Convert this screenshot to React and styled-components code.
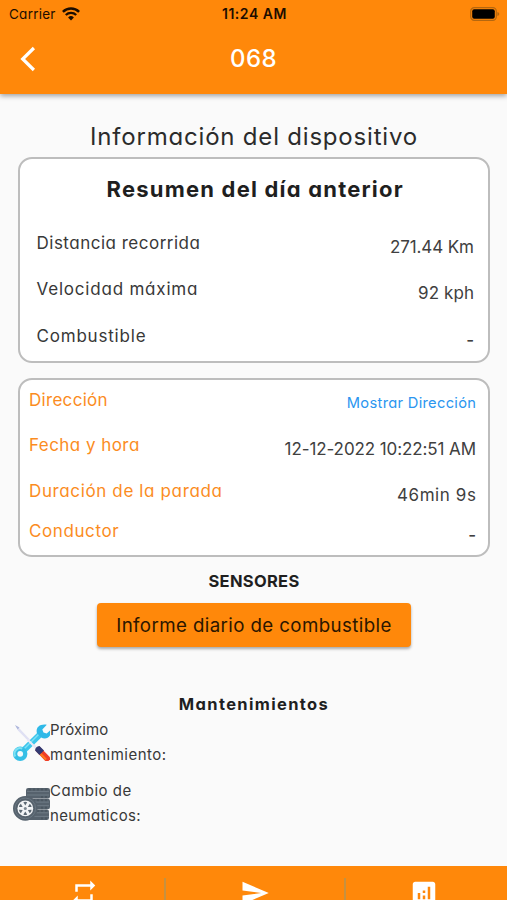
import React from 'react';
import styled, { createGlobalStyle } from 'styled-components';
import { MdRepeat, MdSend, MdAnalytics } from 'react-icons/md';

const GlobalStyle = createGlobalStyle`
  * {
    box-sizing: border-box;
  }

  body {
    margin: 0;
    background-color: #fafafa;
    font-family: Inter, "Liberation Sans", sans-serif;
    font-feature-settings: 'cv11', 'calt' 0;
    color: #1f1f1f;
  }
`;

const Screen = styled.div`
  display: flex;
  flex-direction: column;
  width: 100%;
  height: 900px;
  overflow: hidden;
  background-color: #fafafa;
`;

const Header = styled.header`
  flex: none;
  height: 94px;
  background-color: #ff880a;
  box-shadow: 0 2px 5px rgba(0, 0, 0, 0.36);
`;

const StatusBar = styled.div`
  display: grid;
  grid-template-columns: 1fr auto 1fr;
  align-items: center;
  height: 27px;
  padding: 0 7px 0 9px;
  color: #1c0d00;
`;

const Carrier = styled.div`
  display: flex;
  align-items: center;
  gap: 6px;
  font-size: 13.5px;
  letter-spacing: 0.25px;
`;

const Clock = styled.div`
  font-size: 14px;
  font-weight: 600;
  letter-spacing: 0.55px;
`;

const BatteryBox = styled.div`
  display: flex;
  justify-content: flex-end;
`;

const NavBar = styled.div`
  display: grid;
  grid-template-columns: 60px 1fr 60px;
  align-items: center;
  height: 64px;
  color: #fff;
`;

const BackButton = styled.button`
  display: flex;
  padding: 0 0 0 20px;
  border: 0;
  background: transparent;
  color: #fff;
`;

const NavTitle = styled.h1`
  margin: 0;
  font-size: 24px;
  line-height: 60px;
  font-weight: 500;
  text-align: center;
  letter-spacing: 0.4px;
`;

const Content = styled.main`
  flex: 1;
  display: flex;
  flex-direction: column;
  padding: 27px 17px 0 18px;
`;

const PageTitle = styled.h2`
  margin: 0;
  font-size: 24px;
  line-height: 32px;
  font-weight: 400;
  text-align: center;
  white-space: nowrap;
  color: #2b2b2b;
  letter-spacing: 0.8px;
`;

const Card = styled.section`
  height: ${(props) => props.$height}px;
  margin-top: ${(props) => props.$gap}px;
  padding: ${(props) => props.$padding};
  border: 2px solid #bdbdbd;
  border-radius: 14px;
  background-color: #fff;
`;

const CardTitle = styled.h3`
  margin: 0 0 26.5px;
  font-size: 22px;
  line-height: 30px;
  font-weight: 700;
  text-align: center;
  white-space: nowrap;
  letter-spacing: 1.2px;
`;

const Row = styled.div`
  display: flex;
  justify-content: space-between;
  align-items: flex-start;
  height: ${(props) => props.$height || 46.5}px;
`;

const Label = styled.span`
  font-size: 17px;
  line-height: 24px;
  font-weight: 400;
  color: ${(props) => (props.$accent ? '#fb8c1e' : '#383838')};
  letter-spacing: ${(props) => props.$track || 0}px;
`;

const Value = styled.span`
  margin-right: ${(props) => -(props.$track || 0)}px;
  padding-top: 4px;
  font-size: 17px;
  line-height: 24px;
  font-weight: ${(props) => props.$weight || 400};
  color: #404040;
  letter-spacing: ${(props) => props.$track || 0}px;
`;

const Link = styled(Value)`
  padding-top: 3px;
  font-size: 14.7px;
  color: #2b96f0;
`;

const SectionTitle = styled.h4`
  margin: ${(props) => props.$gap}px 0 0;
  font-size: 16.5px;
  line-height: 24px;
  font-weight: 700;
  text-align: center;
  letter-spacing: ${(props) => props.$track || 0}px;
`;

const ReportButton = styled.button`
  align-self: center;
  width: 314px;
  height: 44px;
  margin-top: 10px;
  padding: 0;
  border: 0;
  border-radius: 4px;
  background-color: #ff880a;
  box-shadow: 0 2px 3px rgba(0, 0, 0, 0.32);
  font-family: inherit;
  font-size: 18.7px;
  color: #2b1600;
  white-space: nowrap;
  font-feature-settings: normal;
  letter-spacing: 0.4px;
`;

const Task = styled.div`
  display: flex;
  align-items: center;
  height: 49px;
  margin: ${(props) => props.$gap}px 0 0 -5px;
`;

const TaskText = styled.div`
  font-size: 15px;
  line-height: 24.5px;
  font-weight: 400;
  color: #383838;
`;

const Line = styled.div`
  white-space: nowrap;
  letter-spacing: ${(props) => props.$track || 0}px;
`;

const BottomBar = styled.nav`
  flex: none;
  display: flex;
  height: 34px;
  padding-top: 12px;
  overflow: hidden;
  background-color: #ff880a;
  color: #fff;
`;

const Tab = styled.div`
  flex: ${(props) => (props.$width ? `0 0 ${props.$width}px` : 1)};
  display: flex;
  justify-content: center;
  height: 40px;
  padding: ${(props) => props.$padding || 0};
`;

const Divider = styled.div`
  width: 2px;
  height: 40px;
  background-color: #c6913f;
`;

const BackIcon = () => (
  <svg width="16" height="26" viewBox="0 0 16 26" fill="none" stroke="currentColor">
    <path d="M13.9 2L2.7 13l11.200 11" strokeWidth="3.2" />
  </svg>
);

const WifiIcon = () => (
  <svg width="18" height="14" viewBox="0 0 18 14" fill="none" stroke="currentColor">
    <path d="M0.9 4.9a11.5 11.5 0 0 1 16.2 0" strokeWidth="2.5" />
    <path d="M3.8 8a7.4 7.4 0 0 1 10.4 0" strokeWidth="2.3" />
    <path d="M9 13.6l-2.9-3.1a4.2 4.2 0 0 1 5.8 0z" fill="currentColor" stroke="none" />
  </svg>
);

const BatteryIcon = () => (
  <svg width="30" height="14" viewBox="0 0 30 14">
    <rect x="0.7" y="0.7" width="25.6" height="12.6" rx="3.6" fill="none" stroke="#b5670f" strokeWidth="1.2" />
    <rect x="2.2" y="2.2" width="22.6" height="9.6" rx="2" fill="#000" />
    <path d="M27.4 4.9q1.9 .6 1.9 2.1t-1.9 2.1z" fill="#b5670f" />
  </svg>
);

const ToolsIcon = () => (
  <svg width="37" height="37" viewBox="0 0 37 37">
    <path d="M2.5 1.5l4 3 17 18-1.4 1.4L5 6.5z" fill="#dfe0f3" />
    <path d="M2 1l4.5 2.6-1.9 2z" fill="#aeb7dc" />
    <path d="M8 29L29 8.5" stroke="#3cc6ec" strokeWidth="6" />
    <path d="M9 27L28 8" stroke="#7fe0f5" strokeWidth="1.5" />
    <path
      d="M33.8 .7l-4.5 4.7 1.2 3.1 3.2 1L37 6.5v5c-2 3.5-6.3 3.7-9 1.8l-4-4c-1.6-5 1.9-9.8 9.8-8.6z"
      fill="#2fb9e8"
    />
    <circle cx="7.2" cy="29.8" r="7.2" fill="#35bfe6" />
    <path d="M2.3 32.5a5.6 5.6 0 0 1 7-8" fill="none" stroke="#7ee2f4" strokeWidth="2" />
    <circle cx="7.2" cy="29.8" r="2.9" fill="#f4fbfd" />
    <path d="M14.5 15.5l8.5 8.5" stroke="#e9e8f6" strokeWidth="2.2" />
    <path d="M26.2 22.2L37 33.2v2.3L35.5 37h-3.2L22.3 26.6z" fill="#ef3f27" />
    <path d="M24.8 27L33 35.500" stroke="#ff7a1a" strokeWidth="2" />
    <path d="M26.5 22l4.5 4.6-4.6 4.5-4.3-4.7q0-3.8 4.4-4.4z" fill="#333a73" />
  </svg>
);

const TiresIcon = () => (
  <svg width="37" height="37" viewBox="0 0 37 37">
    {[3, 13.7, 24.4].map((y, idx) => (
      <g key={idx}>
        <rect x={idx === 2 ? 12 : 13} y={y} width="24" height="10.6" rx="2.2" fill="#56626d" />
        <path d={`M14 ${y + 3.4}h22M14 ${y + 7}h22`} stroke="#6f7c87" strokeWidth="1" />
        <path
          d={`M17 ${y + 0.5}v2M21 ${y + 0.5}v2M25 ${y + 0.5}v2M29 ${y + 0.5}v2M33 ${y + 0.5}v2M33 ${y + 8}v2M29 ${y + 8}v2`}
          stroke="#414c56"
          strokeWidth="1"
        />
      </g>
    ))}
    <circle cx="12.3" cy="23.4" r="12.3" fill="#56626d" />
    <circle cx="12.3" cy="23.4" r="10.3" fill="none" stroke="#6a7782" strokeWidth="1" />
    <circle cx="12.3" cy="23.4" r="7.9" fill="#f2f4f6" />
    {[0, 60, 120, 180, 240, 300].map((angle) => (
      <path
        key={angle}
        d="M12.3 20.4l-1.9-3.2q1.9-1 3.8 0z"
        fill="#5c6873"
        transform={`rotate(${angle} 12.3 23.4)`}
      />
    ))}
    <circle cx="12.3" cy="23.4" r="1.5" fill="#7c8791" />
  </svg>
);

const App = () => {
  return (
    <>
      <GlobalStyle />
      <Screen>
        <Header>
          <StatusBar>
            <Carrier>
              Carrier
              <WifiIcon />
            </Carrier>
            <Clock>11:24 AM</Clock>
            <BatteryBox>
              <BatteryIcon />
            </BatteryBox>
          </StatusBar>
          <NavBar>
            <BackButton>
              <BackIcon />
            </BackButton>
            <NavTitle>068</NavTitle>
          </NavBar>
        </Header>

        <Content>
          <PageTitle>Información del dispositivo</PageTitle>

          <Card $height={206} $gap={4} $padding="15px 14px 0 16.5px">
            <CardTitle>Resumen del día anterior</CardTitle>
            <Row>
              <Label $track={0.5}>Distancia recorrida</Label>
              <Value $track={-0.1}>271.44 Km</Value>
            </Row>
            <Row>
              <Label $track={0.8}>Velocidad máxima</Label>
              <Value $track={0.1}>92 kph</Value>
            </Row>
            <Row>
              <Label $track={0.8}>Combustible</Label>
              <Value $weight={500}>-</Value>
            </Row>
          </Card>

          <Card $height={179} $gap={15} $padding="7.5px 12px 0 9px">
            <Row $height={45}>
              <Label $accent $track={0.3}>Dirección</Label>
              <Link $track={0.3}>Mostrar Dirección</Link>
            </Row>
            <Row $height={46}>
              <Label $accent $track={0.45}>Fecha y hora</Label>
              <Value $track={-0.1}>12-12-2022 10:22:51 AM</Value>
            </Row>
            <Row $height={40}>
              <Label $accent $track={0.63}>Duración de la parada</Label>
              <Value $track={0.6}>46min 9s</Value>
            </Row>
            <Row $height={28}>
              <Label $accent $track={0.6}>Conductor</Label>
              <Value $weight={500}>-</Value>
            </Row>
          </Card>

          <SectionTitle $gap={12} $track={0.3}>SENSORES</SectionTitle>
          <ReportButton>Informe diario de combustible</ReportButton>

          <SectionTitle $gap={45} $track={1.35}>Mantenimientos</SectionTitle>
          <Task $gap={2}>
            <ToolsIcon />
            <TaskText>
              <Line $track={0.1}>Próximo</Line>
              <Line $track={0.5}>mantenimiento:</Line>
            </TaskText>
          </Task>
          <Task $gap={12}>
            <TiresIcon />
            <TaskText>
              <Line $track={0.5}>Cambio de</Line>
              <Line $track={0.35}>neumaticos:</Line>
            </TaskText>
          </Task>
        </Content>

        <BottomBar>
          <Tab $width={164} $padding="0 0 0 3px">
            <MdRepeat size={30} />
          </Tab>
          <Divider />
          <Tab $width={178}>
            <MdSend size={30} />
          </Tab>
          <Divider />
          <Tab $padding="0 5px 0 0">
            <MdAnalytics size={30} />
          </Tab>
        </BottomBar>
      </Screen>
    </>
  );
};

export default App;
